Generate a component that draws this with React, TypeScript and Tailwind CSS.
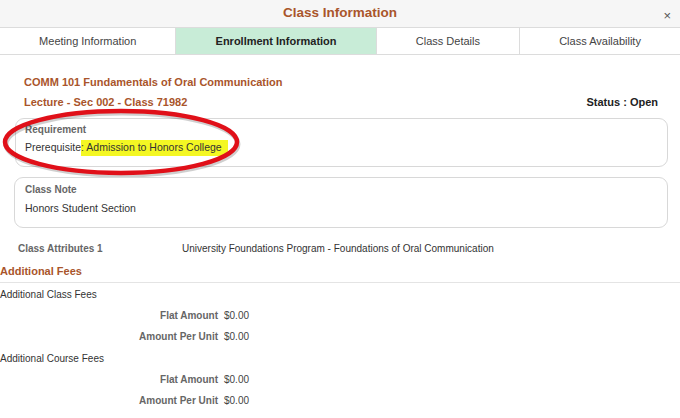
import React from 'react';

const tabs = [
  { label: 'Meeting Information', active: false },
  { label: 'Enrollment Information', active: true },
  { label: 'Class Details', active: false },
  { label: 'Class Availability', active: false },
];

const FeeRow = ({ label, value, h }: { label: string; value: string; h: string }) => (
  <div className={`flex items-center ${h}`}>
    <div className="w-[218px] text-right font-bold text-[#666]">{label}</div>
    <div className="pl-[6px] text-[#444]">{value}</div>
  </div>
);

const App = () => {
  return (
    <div className="h-[418px] w-[680px] overflow-hidden bg-white text-[10px] text-[#333]" style={{ fontFamily: '"Liberation Sans", Arial, sans-serif' }}>
      {/* Header */}
      <div className="relative flex h-[28px] items-center justify-center border-b border-[#dcdcdc] bg-[#f6f6f6]">
        <span className="text-[13.5px] font-bold text-[#a9552b]">Class Information</span>
        <span className="absolute right-[9px] top-[6px] text-[13px] text-[#555]">×</span>
      </div>

      {/* Tabs */}
      <div className="flex h-[27px] border-b border-[#dcdcdc] text-[11px]">
        {tabs.map((t, i) => (
          <div
            key={t.label}
            className={`flex flex-auto items-center justify-center ${i > 0 ? 'border-l border-[#dcdcdc]' : ''} ${t.active ? 'bg-[#c8ecd7] font-bold text-[#222]' : 'text-[#444]'}`}
          >
            {t.label}
          </div>
        ))}
      </div>

      {/* Content */}
      <div className="pt-[17px]">
        <div className="pl-[24px] text-[11px] font-bold text-[#a9552b]">
          <div className="flex h-[20px] items-center">COMM 101 Fundamentals of Oral Communication</div>
          <div className="flex h-[20px] items-center justify-between pr-[22px]">
            <span>Lecture - Sec 002 - Class 71982</span>
            <span className="text-[#222]">Status : Open</span>
          </div>
        </div>

        <div className="relative ml-[15px] mr-[12px] mt-[6px] h-[49px] rounded-[9px] border border-[#d8d8d8] px-[9px] pt-[2px]">
          <div className="flex h-[17px] items-center font-bold text-[#666]">Requirement</div>
          <div className="flex h-[20px] items-center text-[10.5px]">
            Prerequisite<span className="bg-[#f4f723]">: Admission to Honors College&nbsp;&nbsp;</span>
          </div>
          <svg className="pointer-events-none absolute left-[-16px] top-[-12px]" width="244" height="70" viewBox="0 0 244 70">
            <ellipse cx="121" cy="35" rx="116" ry="31" fill="none" stroke="#00000030" strokeWidth="5" transform="translate(1 2)" />
            <ellipse cx="121" cy="35" rx="116" ry="31" fill="none" stroke="#e01019" strokeWidth="4.5" />
          </svg>
        </div>

        <div className="ml-[14px] mr-[12px] mt-[10px] h-[51px] rounded-[9px] border border-[#d8d8d8] px-[10px] pt-[2px]">
          <div className="flex h-[18px] items-center font-bold text-[#666]">Class Note</div>
          <div className="flex h-[22px] items-center text-[10.5px]">Honors Student Section</div>
        </div>

        <div className="mt-[9px] flex h-[22px] items-center">
          <div className="w-[182px] pl-[18px] font-bold text-[#666]">Class Attributes 1</div>
          <div>University Foundations Program - Foundations of Oral Communication</div>
        </div>

        <div className="mt-[2px] flex h-[22px] items-center border-b border-[#e4e4e4] text-[11px] font-bold text-[#a9552b]">Additional Fees</div>

        <div className="flex h-[22px] items-center">Additional Class Fees</div>
        <FeeRow label="Flat Amount" value="$0.00" h="h-[20px]" />
        <FeeRow label="Amount Per Unit" value="$0.00" h="h-[22px]" />
        <div className="flex h-[22px] items-center">Additional Course Fees</div>
        <FeeRow label="Flat Amount" value="$0.00" h="h-[20px]" />
        <FeeRow label="Amount Per Unit" value="$0.00" h="h-[22px]" />
      </div>
    </div>
  );
};

export default App;
